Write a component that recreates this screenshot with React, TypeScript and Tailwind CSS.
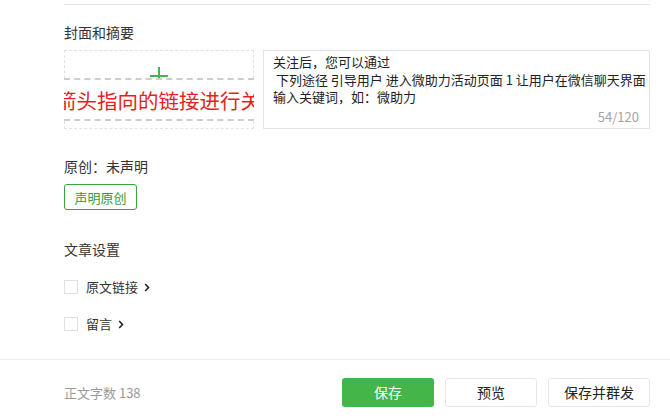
const settings = ["原文链接", "留言"];

function Chevron() {
  return (
    <svg width="6" height="9" viewBox="0 0 6 9" className="ml-[6px]">
      <path d="M1.2 1l3.3 3.5L1.2 8" fill="none" stroke="#222" strokeWidth="1.6" />
    </svg>
  );
}

export default function App() {
  return (
    <div className="flex h-[418px] w-[670px] flex-col overflow-hidden bg-white font-['Noto_Sans_CJK_SC',sans-serif] text-[#333]">
      <div className="h-[359px] pl-16 pr-5 pt-1">
        <div className="border-t border-[#e7e7e7]">
          <h3 className="mt-[17px] text-[14px] leading-5">封面和摘要</h3>

          <div className="mt-2 flex gap-[9px]">
            {/* cover */}
            <div className="relative h-[79px] w-[190px] shrink-0 border border-dashed border-[#e2e2e2]">
              <div className="absolute left-[85px] top-[16px] h-[18px] w-[18px]">
                <span className="absolute left-0 top-[8px] h-[2px] w-[18px] bg-[#44b549]" />
                <span className="absolute left-[8px] top-0 h-[18px] w-[2px] bg-[#44b549]" />
              </div>
              <div className="absolute -left-px -right-px top-[27px] flex h-[43px] items-center overflow-hidden border-y-2 border-dashed border-[#cdcdcd] bg-white">
                <span className="-ml-[8px] whitespace-nowrap text-[20.5px] leading-6 text-[#e51f23]">箭头指向的链接进行关注</span>
              </div>
            </div>

            {/* digest */}
            <div className="relative h-[79px] min-w-0 flex-1 overflow-hidden border border-[#e4e4e4] px-[9px] pt-[2px] text-[13px] leading-[17.5px] text-[#222]">
              <div className="whitespace-pre">关注后，您可以通过</div>
              <div className="whitespace-pre"> 下列途径 引导用户 进入微助力活动页面 1 让用户在微信聊天界面</div>
              <div className="whitespace-pre">输入关键词，如：微助力</div>
              <span className="absolute bottom-[3px] right-[10px] text-[13px] text-[#a3a3a3]">54/120</span>
            </div>
          </div>

          <p className="mt-[27px] text-[14px] leading-5">原创：未声明</p>
          <button className="mt-2 h-[26px] w-[73px] rounded-[3px] border border-[#3aa33a] text-[13px] leading-none text-[#2f9e2f]">
            声明原创
          </button>

          <h3 className="mt-[29px] text-[14px] leading-5">文章设置</h3>
          <div className="mt-[18px] flex flex-col gap-[17px]">
            {settings.map((s) => (
              <label key={s} className="flex h-5 items-center text-[13px] text-[#333]">
                <span className="h-[14px] w-[14px] border border-[#e0e0e0] bg-white" />
                <span className="ml-2">{s}</span>
                <Chevron />
              </label>
            ))}
          </div>
        </div>
      </div>

      <div className="flex flex-1 items-start border-t border-[#eeeeee] pl-16 pr-5 pt-[18px]">
        <div className="flex h-[29px] flex-1 items-center text-[13px] text-[#9a9a9a]">正文字数 138</div>
        <div className="flex gap-[11px] text-[14px]">
          <button className="h-[29px] w-[92px] rounded-[3px] bg-[#44b549] text-white">保存</button>
          <button className="h-[29px] w-[92px] rounded-[3px] border border-[#e4e8eb] bg-white text-[#222]">预览</button>
          <button className="h-[29px] w-[102px] rounded-[3px] border border-[#e4e8eb] bg-white text-[#222]">保存并群发</button>
        </div>
      </div>
    </div>
  );
}
